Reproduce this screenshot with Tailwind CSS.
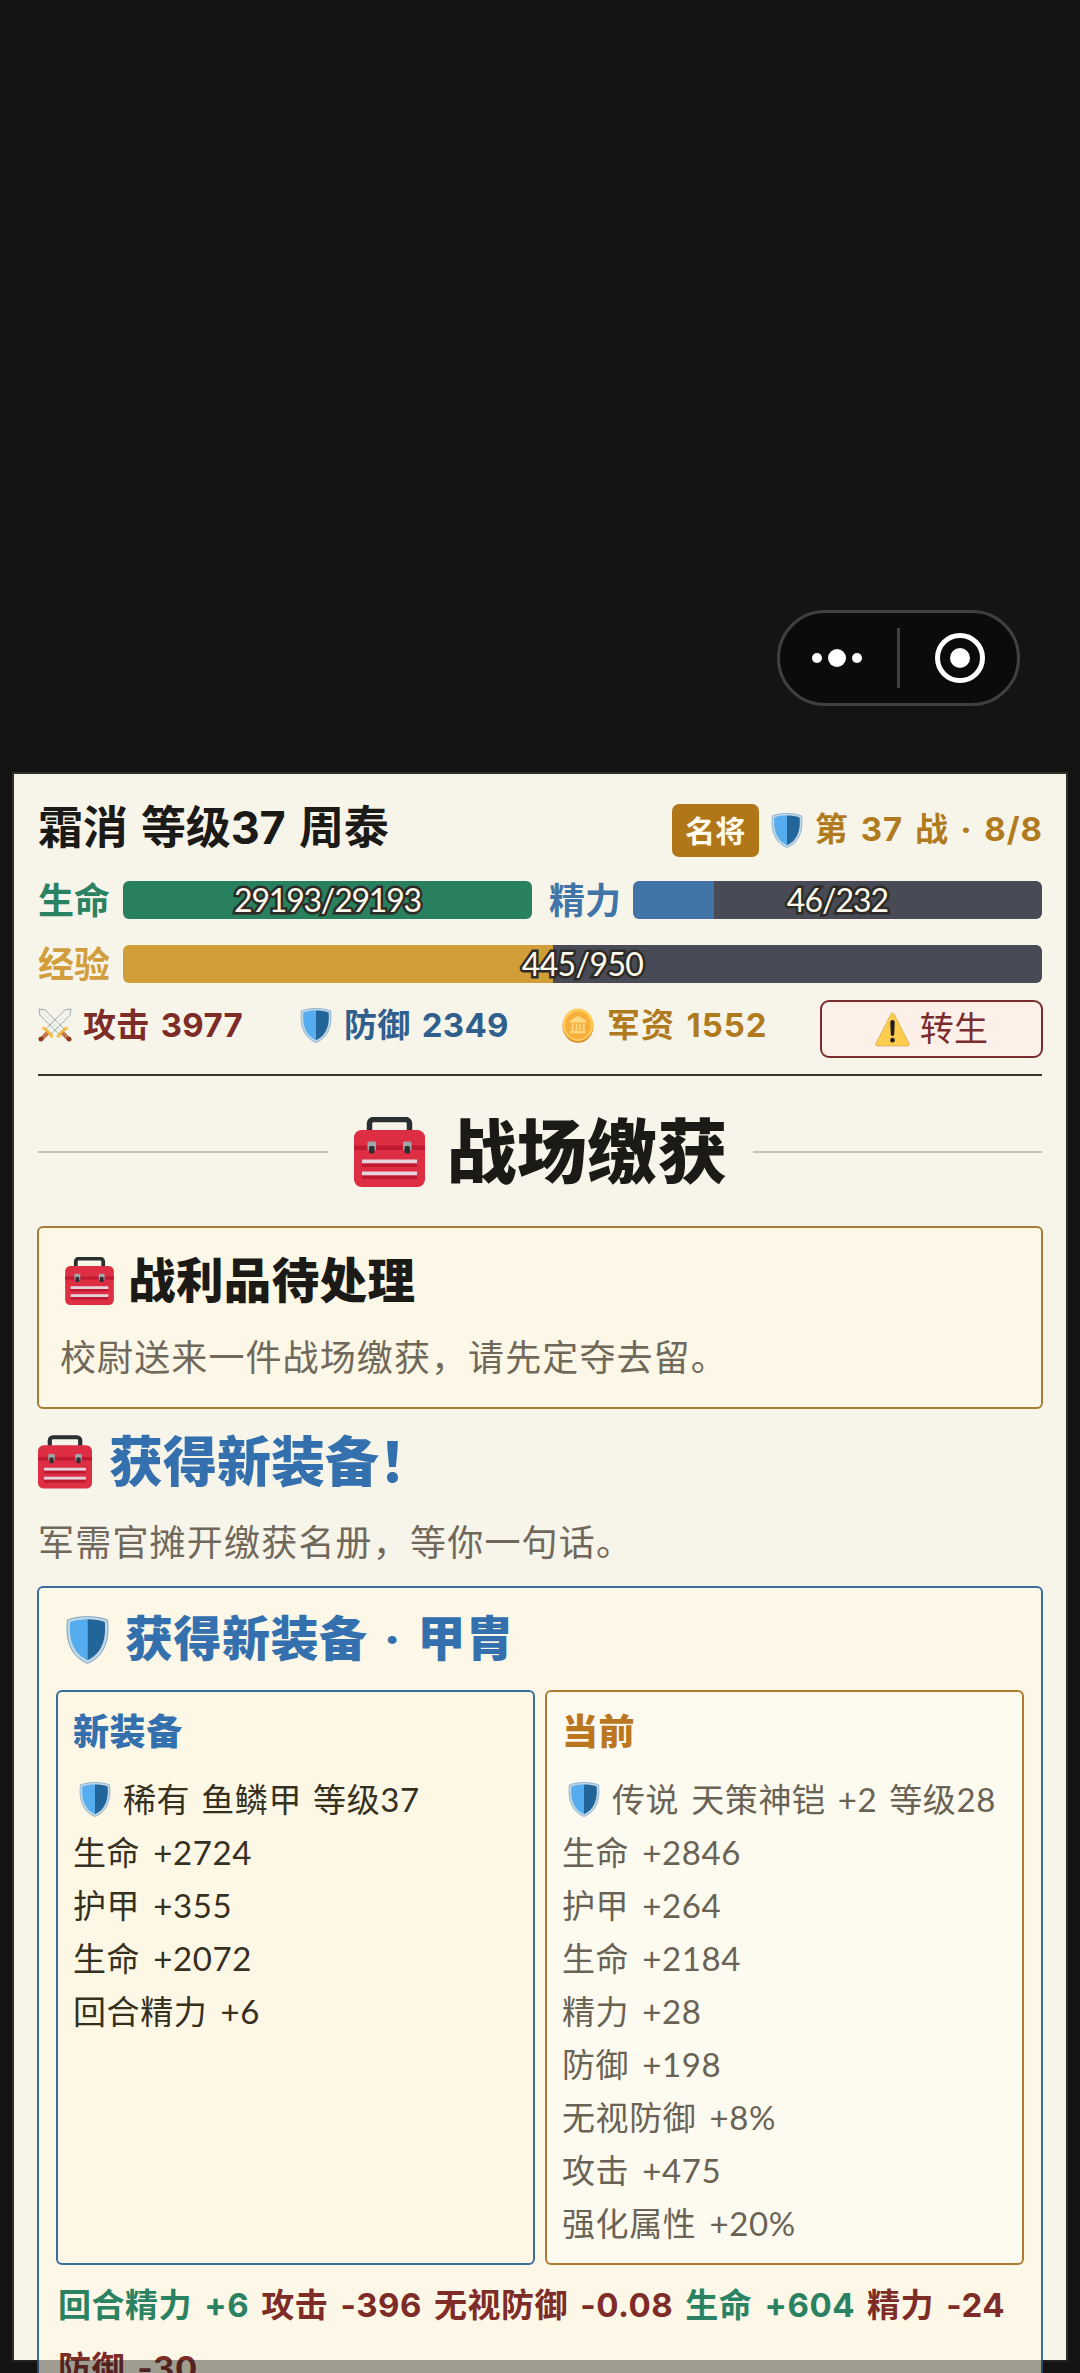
<!DOCTYPE html>
<html lang="zh-CN">
<head>
<meta charset="utf-8">
<title>战场缴获</title>
<script src="https://cdn.jsdelivr.net/npm/@tailwindcss/browser@4"></script>
</head>
<body class="h-[2373px] overflow-hidden bg-[#141413] font-['Lato','Noto_Sans_CJK_SC',sans-serif] text-[#1b1a17]">

<svg class="hidden">
  <defs>
    <linearGradient id="blade" x1="0" y1="0" x2="1" y2="1"><stop offset="0" stop-color="#b4c3cc"/><stop offset="1" stop-color="#8299a6"/></linearGradient>
  </defs>
  <symbol id="shield" viewBox="0 0 32 36">
    <path d="M16 .5C21 .5 27 1.2 31 3c.6 6 .8 13-2 19.500C26.500 29 22 33 16 35.500 10 33 5.500 29 3 22.500.2 16 .4 9 1 3 5 1.200 11 .5 16 .5Z" fill="#c3d8e6" stroke="#6f9fc4" stroke-width=".7"/>
    <path d="M16 2.500c-5 0-9.500.6-13 2-.4 5.500-.4 11.500 2 17.300 2.200 5.400 6 9 11 11.400Z" fill="#55acee"/>
    <path d="M16 2.500c5 0 9.500.6 13 2 .4 5.500.4 11.500-2 17.300-2.200 5.400-6 9-11 11.400Z" fill="#226699"/>
  </symbol>
  <symbol id="toolbox" viewBox="0 0 71 70">
    <path d="M15.500 16V6.500a4 4 0 0 1 4-4h32a4 4 0 0 1 4 4V16" fill="none" stroke="#292f33" stroke-width="5.500"/>
    <rect y="13" width="71" height="57" rx="7.500" fill="#dd2e44"/>
    <rect y="28.500" width="71" height="4.500" fill="#be1931"/>
    <rect x="13.500" y="24.500" width="8.500" height="9" rx="1.500" fill="#a0a5a9"/>
    <rect x="49" y="24.500" width="8.500" height="9" rx="1.500" fill="#a0a5a9"/>
    <rect x="15" y="29" width="5.500" height="7.500" rx="1.500" fill="#292f33"/>
    <rect x="50.500" y="29" width="5.500" height="7.500" rx="1.500" fill="#292f33"/>
    <path d="M8 42.500h55v4H8zM8 54.500h55v4H8z" fill="#e6d3dc"/>
    <path d="M8 46.500h55v3.500H8zM8 58.500h55V62H8z" fill="#be1931"/>
  </symbol>
  <symbol id="swords" viewBox="0 0 36 36">
    <g id="sw">
      <path d="M1 1 7.500 2 27.500 22 22 27.500 2 7.500Z" fill="url(#blade)" stroke="#7e919c" stroke-width=".8"/>
      <path d="M2 2 24.500 24.500" stroke="#dfe8ed" stroke-width="1.200"/>
      <path d="m26.500 27 5.500 5.500" stroke="#b5532c" stroke-width="4.200" stroke-linecap="round"/>
      <path d="m28.500 26.500-2 3m4-1-2 3" stroke="#e3c7a0" stroke-width="1"/>
      <circle cx="33" cy="33" r="2.500" fill="#8a3b1f"/>
      <path d="M29.500 21.500 21.500 29.500" stroke="#f0b43c" stroke-width="3" stroke-linecap="round"/>
      <circle cx="30" cy="21.500" r="1.800" fill="#f5c45a"/><circle cx="21.500" cy="30" r="1.800" fill="#f5c45a"/>
    </g>
    <use href="#sw" transform="matrix(-1 0 0 1 36 0)"/>
  </symbol>
  <symbol id="coin" viewBox="0 0 32 36">
    <ellipse cx="16" cy="18.500" rx="16" ry="17.300" fill="#d98e2b"/>
    <ellipse cx="16" cy="17.300" rx="15.800" ry="16.800" fill="#ffcc5a"/>
    <ellipse cx="16" cy="17.800" rx="13.200" ry="14.300" fill="#f9ae3c"/>
    <path d="M16 8 24.500 13v2H7.500v-2ZM9.500 16h2v7h-2zm4 0h1.800v7h-1.800zm3.600 0H19v7h-1.900zm3.800 0h2v7h-2zM8 23.500h16V26H8z" fill="#ffd983"/>
  </symbol>
  <symbol id="warn" viewBox="0 0 36 36">
    <path d="M16.300 2.300c.8-1.600 2.700-1.600 3.500 0L35 32.300c.7 1.500-.1 2.700-1.700 2.700H2.600C1 35 .3 33.800 1 32.300Z" fill="#ffcc4d" stroke="#caa75a" stroke-width=".7"/>
    <path d="M15.700 10.500a2.300 2.300 0 0 1 4.600 0l-.5 12.500a1.800 1.800 0 0 1-3.600 0Z" fill="#231f20"/>
    <circle cx="18" cy="29" r="2.400" fill="#231f20"/>
  </symbol>
</svg>

<!-- mini-program capsule -->
<div class="flex h-[772px] justify-end pt-[610px] pr-[60px]">
  <div class="flex h-24 w-[243px] items-center rounded-full border-3 border-[#40403f] bg-[#0b0b0a]">
    <div class="flex w-[117px] items-center justify-center gap-1.5 pr-[3px]">
      <i class="size-2.5 rounded-full bg-white"></i><i class="size-[18px] rounded-full bg-white"></i><i class="size-2.5 rounded-full bg-white"></i>
    </div>
    <div class="h-[60px] w-[3px] bg-[#40403f]"></div>
    <div class="flex flex-1 items-center justify-center pl-[3px]">
      <div class="flex size-[50px] items-center justify-center rounded-full border-5 border-white"><i class="size-5 rounded-full bg-white"></i></div>
    </div>
  </div>
</div>

<main class="mx-3 flex h-[1590px] flex-col border-2 border-[#302e27] bg-[#f7f5ea] px-[23px] pt-6">
  <!-- player header -->
  <header class="mx-px flex h-[64px] shrink-0 items-center justify-between">
    <h1 class="-mt-[5px] font-['Inter','Noto_Sans_CJK_SC',sans-serif] text-[45px] leading-[60px] font-bold tracking-[-0.200px] [word-spacing:3px]">霜消 等级37 周泰</h1>
    <div class="flex items-center text-[#b07b1e]">
      <span class="mr-3 flex h-[53px] w-[87px] shrink-0 items-center justify-center rounded-[7px] bg-[#b07618] text-[30px] font-bold text-[#fffbee]">名将</span>
      <svg class="mr-3 h-[35px] w-8"><use href="#shield"/></svg>
      <span class="-mr-px font-['Inter','Noto_Sans_CJK_SC',sans-serif] text-[33px] font-bold tracking-[1px] whitespace-nowrap [word-spacing:3px]">第 37 战 <span class="font-['Roboto'] font-black">·</span> 8/8</span>
    </div>
  </header>

  <section class="mx-px mt-[19px] flex h-[38px] shrink-0 items-center text-[36px] font-bold">
    <span class="w-[85px] text-[#2a8262]">生命</span>
    <div class="flex h-[38px] w-[409px] items-center justify-center overflow-hidden rounded-[6px] bg-[#28805f] text-[32px] font-normal tracking-[-1.200px] text-[#fffbee] [-webkit-text-stroke:5px_#2c2b25] [paint-order:stroke_fill]">29193/29193</div>
    <span class="ml-[17px] w-[84px] text-[#4175a8]">精力</span>
    <div class="flex h-[38px] w-[409px] items-center justify-center rounded-[6px] bg-[linear-gradient(to_right,#4175a8_19.8%,#484a55_19.8%)] text-[32px] font-normal tracking-[-1px] text-[#fffbee] [-webkit-text-stroke:5px_#2c2b25] [paint-order:stroke_fill]">46/232</div>
  </section>
  <section class="mx-px mt-[26px] flex h-[38px] shrink-0 items-center text-[36px] font-bold">
    <span class="w-[85px] text-[#d19e3b]">经验</span>
    <div class="flex h-[38px] w-[919px] items-center justify-center rounded-[6px] bg-[linear-gradient(to_right,#d19d38_46.8%,#484a55_46.8%)] text-[32px] font-normal tracking-[-0.600px] text-[#fffbee] [-webkit-text-stroke:5px_#2c2b25] [paint-order:stroke_fill]">445/950</div>
  </section>

  <section class="ml-px mt-[17px] grid h-[58px] shrink-0 grid-cols-[262px_262px_258px_223px] font-['Inter','Noto_Sans_CJK_SC',sans-serif] text-[33px] leading-[50px] font-bold tracking-[0.300px] [word-spacing:3px]">
    <div class="flex h-[50px] items-center gap-[11px] text-[#7e2c27]"><svg class="size-[34px]"><use href="#swords"/></svg><span>攻击 3977</span></div>
    <div class="flex h-[50px] items-center gap-3 text-[#305f8e]"><svg class="h-[35px] w-8"><use href="#shield"/></svg><span>防御 2349</span></div>
    <div class="flex h-[50px] items-center gap-[13px] tracking-[0.900px] text-[#b07b1e]"><svg class="h-[35px] w-8"><use href="#coin"/></svg><span>军资 1552</span></div>
    <button class="flex items-center justify-center gap-2.5 rounded-[9px] border-2 border-[#7a2c2f] bg-[#fdf0e8] text-[34px] font-normal text-[#7a2c2f]"><svg class="size-[35px]"><use href="#warn"/></svg>转生</button>
  </section>
  <hr class="mx-px mt-4 h-0.5 shrink-0 border-0 bg-[#37322a]">

  <h2 class="mx-px mt-[34px] flex h-[84px] shrink-0 items-center text-[70px] leading-[84px] font-black whitespace-nowrap">
    <i class="h-0.5 flex-1 bg-[#c5c2b7]"></i>
    <svg class="ml-[26px] h-[70px] w-[71px]"><use href="#toolbox"/></svg>
    <span class="-mt-0.5 mr-[28px] ml-[22px] w-[278px] tracking-[0.300px]">战场缴获</span>
    <i class="h-0.5 flex-1 bg-[#c5c2b7]"></i>
  </h2>

  <section class="mt-8 h-[183px] shrink-0 rounded-[6px] border-2 border-[#a67c38] bg-[#fcf7e6] px-[22px] pt-[25px]">
    <h3 class="flex h-14 items-center gap-[14px] pl-1 text-[47.500px] leading-[54px] font-black tracking-[0.400px]"><svg class="h-12 w-[49px]"><use href="#toolbox"/></svg><span class="-mt-0.5">战利品待处理</span></h3>
    <p class="-ml-px mt-5 text-[36px] leading-[56px] tracking-[1.100px] text-[#70685a]">校尉送来一件战场缴获，请先定夺去留。</p>
  </section>

  <h3 class="ml-px mt-[21px] flex h-16 shrink-0 items-center gap-[17px] text-[54px] leading-[64px] font-black text-[#3470ad]"><svg class="h-[54px] w-[54px]"><use href="#toolbox"/></svg><span>获得新装备！</span></h3>
  <p class="ml-px mt-5 shrink-0 text-[36px] leading-[56px] tracking-[1.200px] text-[#70685a]">军需官摊开缴获名册，等你一句话。</p>

  <section class="mt-4 h-[830px] shrink-0 rounded-[6px] border-2 border-[#386d9e] bg-[#fcf7e6] px-[17px] pt-[22px]">
    <h3 class="ml-[9px] flex h-[60px] items-center gap-[15px] text-[48px] leading-[60px] font-black tracking-[0.500px] whitespace-nowrap text-[#3470ad] [word-spacing:5px]"><svg class="h-12 w-[45px]"><use href="#shield"/></svg><span class="-mt-0.5">获得新装备 <span class="font-['Roboto'] font-black">·</span> 甲胄</span></h3>
    <div class="mt-5 grid h-[575px] grid-cols-2 gap-2.5 text-[33px] leading-[53px] tracking-[0.600px] whitespace-nowrap [word-spacing:4px]">
      <div class="rounded-[6px] border-2 border-[#386d9e] bg-[#fdf8e6] pt-[13px] pl-[15px] text-[#36301f]">
        <h4 class="text-[36px] leading-[53px] font-black text-[#3470ad]">新装备</h4>
        <div class="mt-[15px] flex items-center pl-[6px] [word-spacing:2px]"><svg class="mr-3 h-[35px] w-8"><use href="#shield"/></svg>稀有 鱼鳞甲 等级37</div>
        <div>生命 +2724</div>
        <div>护甲 +355</div>
        <div>生命 +2072</div>
        <div>回合精力 +6</div>
      </div>
      <div class="rounded-[6px] border-2 border-[#ae7a30] bg-[#fdfbef] pt-[13px] pl-[15px] text-[#6a6355]">
        <h4 class="text-[36px] leading-[53px] font-black text-[#bb771f]">当前</h4>
        <div class="mt-[15px] flex items-center pl-[6px] [word-spacing:3px]"><svg class="mr-3 h-[35px] w-8"><use href="#shield"/></svg>传说 天策神铠 +2 等级28</div>
        <div>生命 +2846</div>
        <div>护甲 +264</div>
        <div>生命 +2184</div>
        <div>精力 +28</div>
        <div>防御 +198</div>
        <div>无视防御 +8%</div>
        <div>攻击 +475</div>
        <div>强化属性 +20%</div>
      </div>
    </div>
    <div class="mt-[9px] -mr-3 flex flex-wrap gap-x-3 pl-0.5 font-['Inter','Noto_Sans_CJK_SC',sans-serif] text-[33px] leading-[63px] font-bold tracking-[0.500px] text-[#7e2c27] [word-spacing:4px]">
      <span class="text-[#2a8262]">回合精力 +6</span><span>攻击 -396</span><span>无视防御 -0.08</span><span class="text-[#2a8262]">生命 +604</span><span>精力 -24</span><span>防御 -30</span>
    </div>
  </section>
</main>
<!-- bottom scrim over the page edge -->
<div class="absolute inset-x-0 top-[2360px] h-[13px] bg-[#141413]/40"></div>
</body>
</html>
